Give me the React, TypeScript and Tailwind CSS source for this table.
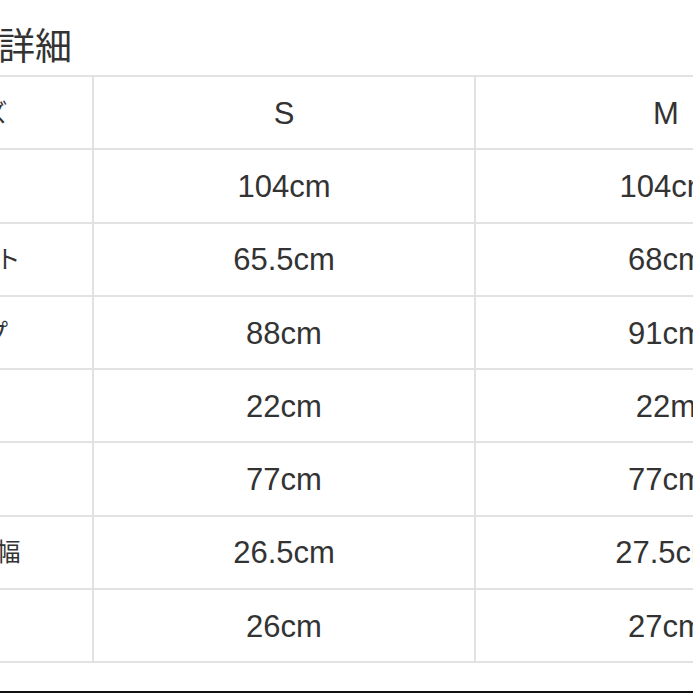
import React from "react";

const rows: [string, string, string][] = [
  ["サイズ", "S", "M"],
  ["総丈", "104cm", "104cm"],
  ["ウエスト", "65.5cm", "68cm"],
  ["ヒップ", "88cm", "91cm"],
  ["股上", "22cm", "22m"],
  ["股下", "77cm", "77cm"],
  ["ワタリ幅", "26.5cm", "27.5cm"],
  ["裾幅", "26cm", "27cm"],
];

export default function App() {
  return (
    <div
      className="w-[693px] h-[693px] overflow-hidden bg-white flex flex-col text-[#333]"
      style={{ fontFamily: '"Liberation Sans", "Noto Sans CJK JP", sans-serif' }}
    >
      <div className="ml-[-151px] w-[1009px] flex flex-col">
        <div className="ml-[39px] mt-[29px] h-[37px] text-[37px] leading-[37px] whitespace-nowrap">
          サイズ詳細
        </div>
        <div className="mt-[9px] border-t-2 border-[#e2e2e2] grid grid-cols-[245px_382px_382px]">
          {rows.map((r, i) => (
            <React.Fragment key={i}>
              <div className="h-[73.25px] pt-[2px] border-b-2 border-r-2 border-[#e2e2e2] flex items-center justify-center text-[25px] whitespace-nowrap">
                {r[0]}
              </div>
              <div className="h-[73.25px] pt-[3px] border-b-2 border-r-2 border-[#e2e2e2] flex items-center justify-center text-[31px] whitespace-nowrap">
                {r[1]}
              </div>
              <div className="h-[73.25px] pt-[3px] border-b-2 border-r-2 border-[#e2e2e2] flex items-center justify-center text-[31px] whitespace-nowrap">
                {r[2]}
              </div>
            </React.Fragment>
          ))}
        </div>
      </div>
      <div className="mt-auto h-[2px] bg-[#111]" />
    </div>
  );
}
